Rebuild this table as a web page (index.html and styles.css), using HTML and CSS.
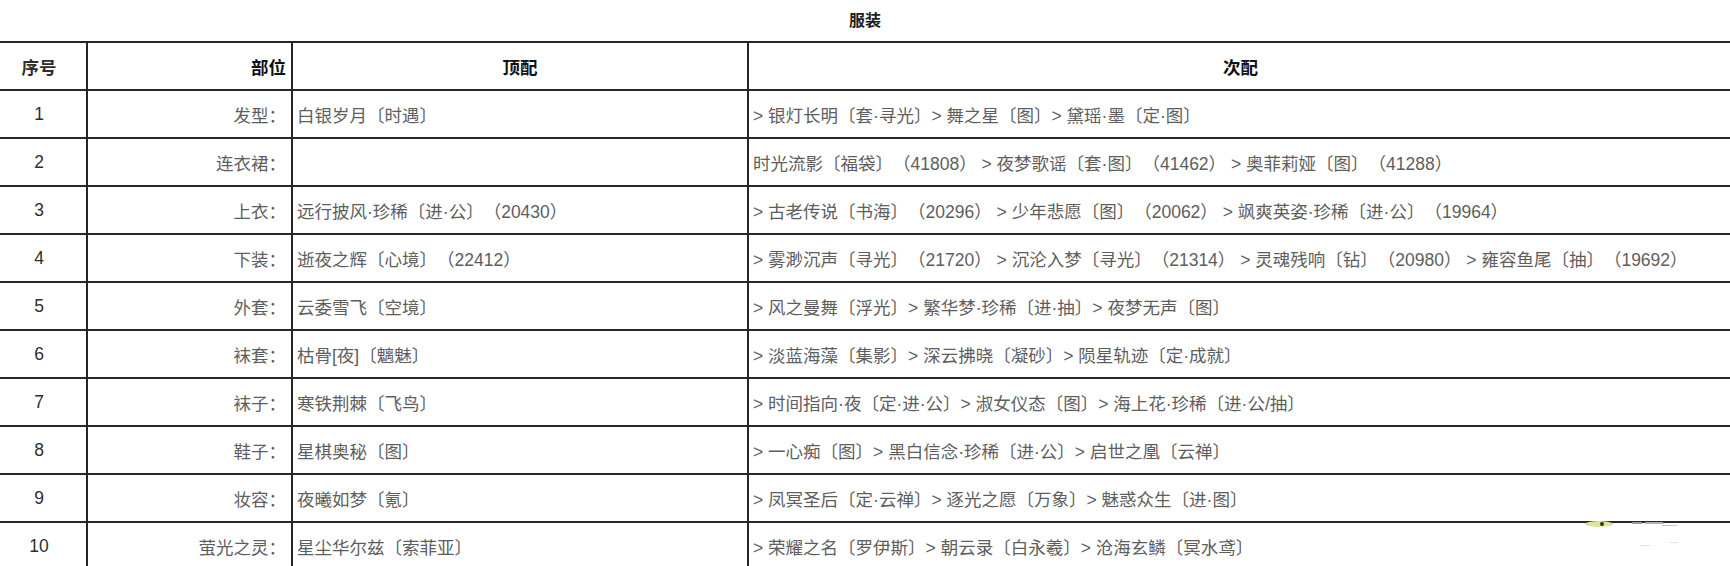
FILE: index.html
```html
<!DOCTYPE html>
<html lang="zh-CN">
<head>
<meta charset="utf-8">
<title>服装</title>
<link rel="stylesheet" href="styles.css">
</head>
<body>
<div class="title">服装</div>
<table class="sheet">
  <colgroup>
    <col class="c-no">
    <col class="c-part">
    <col class="c-top">
    <col class="c-next">
  </colgroup>
  <thead>
    <tr><th class="no">序号</th><th class="part">部位</th><th class="center">顶配</th><th class="center">次配</th></tr>
  </thead>
  <tbody>
    <tr><td class="no">1</td><td class="part">发型：</td><td>白银岁月〔时遇〕</td><td>&gt; 银灯长明〔套·寻光〕&gt; 舞之星〔图〕&gt; 黛瑶·墨〔定·图〕</td></tr>
    <tr><td class="no">2</td><td class="part">连衣裙：</td><td></td><td>时光流影〔福袋〕（41808） &gt; 夜梦歌谣〔套·图〕（41462） &gt; 奥菲莉娅〔图〕（41288）</td></tr>
    <tr><td class="no">3</td><td class="part">上衣：</td><td>远行披风·珍稀〔进·公〕（20430）</td><td>&gt; 古老传说〔书海〕（20296） &gt; 少年悲愿〔图〕（20062） &gt; 飒爽英姿·珍稀〔进·公〕（19964）</td></tr>
    <tr><td class="no">4</td><td class="part">下装：</td><td>逝夜之辉〔心境〕（22412）</td><td>&gt; 雾渺沉声〔寻光〕（21720） &gt; 沉沦入梦〔寻光〕（21314） &gt; 灵魂残响〔钻〕（20980） &gt; 雍容鱼尾〔抽〕（19692）</td></tr>
    <tr><td class="no">5</td><td class="part">外套：</td><td>云委雪飞〔空境〕</td><td>&gt; 风之曼舞〔浮光〕&gt; 繁华梦·珍稀〔进·抽〕&gt; 夜梦无声〔图〕</td></tr>
    <tr><td class="no">6</td><td class="part">袜套：</td><td>枯骨[夜]〔魑魅〕</td><td>&gt; 淡蓝海藻〔集影〕&gt; 深云拂晓〔凝砂〕&gt; 陨星轨迹〔定·成就〕</td></tr>
    <tr><td class="no">7</td><td class="part">袜子：</td><td>寒铁荆棘〔飞鸟〕</td><td>&gt; 时间指向·夜〔定·进·公〕&gt; 淑女仪态〔图〕&gt; 海上花·珍稀〔进·公/抽〕</td></tr>
    <tr><td class="no">8</td><td class="part">鞋子：</td><td>星棋奥秘〔图〕</td><td>&gt; 一心痴〔图〕&gt; 黑白信念·珍稀〔进·公〕&gt; 启世之凰〔云禅〕</td></tr>
    <tr><td class="no">9</td><td class="part">妆容：</td><td>夜曦如梦〔氪〕</td><td>&gt; 凤冥圣后〔定·云禅〕&gt; 逐光之愿〔万象〕&gt; 魅惑众生〔进·图〕</td></tr>
    <tr><td class="no">10</td><td class="part">萤光之灵：</td><td>星尘华尔兹〔索菲亚〕</td><td>&gt; 荣耀之名〔罗伊斯〕&gt; 朝云录〔白永羲〕&gt; 沧海玄鳞〔冥水鸢〕</td></tr>
  </tbody>
</table>
<div class="mark">
  <svg width="100" height="34" viewBox="0 0 100 34">
    <ellipse cx="14" cy="4" rx="14" ry="3" fill="#d8e89a"/>
    <circle cx="17" cy="4" r="2" fill="#2a3a10"/>
    <rect x="47" y="2" width="10" height="2" fill="#9a9a9a"/>
    <rect x="60" y="2" width="18" height="2" fill="#b0b0b0"/>
    <rect x="77" y="5" width="15" height="1" fill="#c4c4c4"/>
    <rect x="55" y="25" width="10" height="1" fill="#e2e2e2"/>
    <rect x="85" y="22" width="8" height="1" fill="#e2e2e2"/>
  </svg>
</div>
</body>
</html>
```

FILE: styles.css
```css
html, body {
  margin: 0;
  padding: 0;
  background: #ffffff;
  overflow: hidden;
}

body {
  position: relative;
  font-family: "Liberation Sans", "Noto Sans CJK SC", sans-serif;
  font-size: 17.5px;
  color: #5e5e5e;
  text-spacing-trim: space-all;
}

.title {
  height: 41px;
  box-sizing: border-box;
  padding-bottom: 3px;
  display: flex;
  align-items: center;
  justify-content: center;
  font-weight: bold;
  font-size: 16px;
  color: #1e1e1e;
}

.sheet {
  border-collapse: collapse;
  table-layout: fixed;
  width: 1734px;
}

.c-no { width: 87px; }
.c-part { width: 205px; }
.c-top { width: 456px; }

.sheet th,
.sheet td {
  border: 2px solid #262626;
  height: 46px;
  padding: 0 4px;
  white-space: nowrap;
  overflow: hidden;
  text-align: left;
  vertical-align: middle;
}

.sheet tr > :first-child {
  border-left: none;
}

.sheet th {
  font-weight: bold;
  color: #111111;
}

.sheet .no {
  text-align: center;
  padding-right: 12px;
  color: #2e2e2e;
}

.sheet .part {
  text-align: right;
  padding-right: 5px;
}

.sheet .center {
  text-align: center;
}

.mark {
  position: absolute;
  left: 1585px;
  top: 520px;
}
```
